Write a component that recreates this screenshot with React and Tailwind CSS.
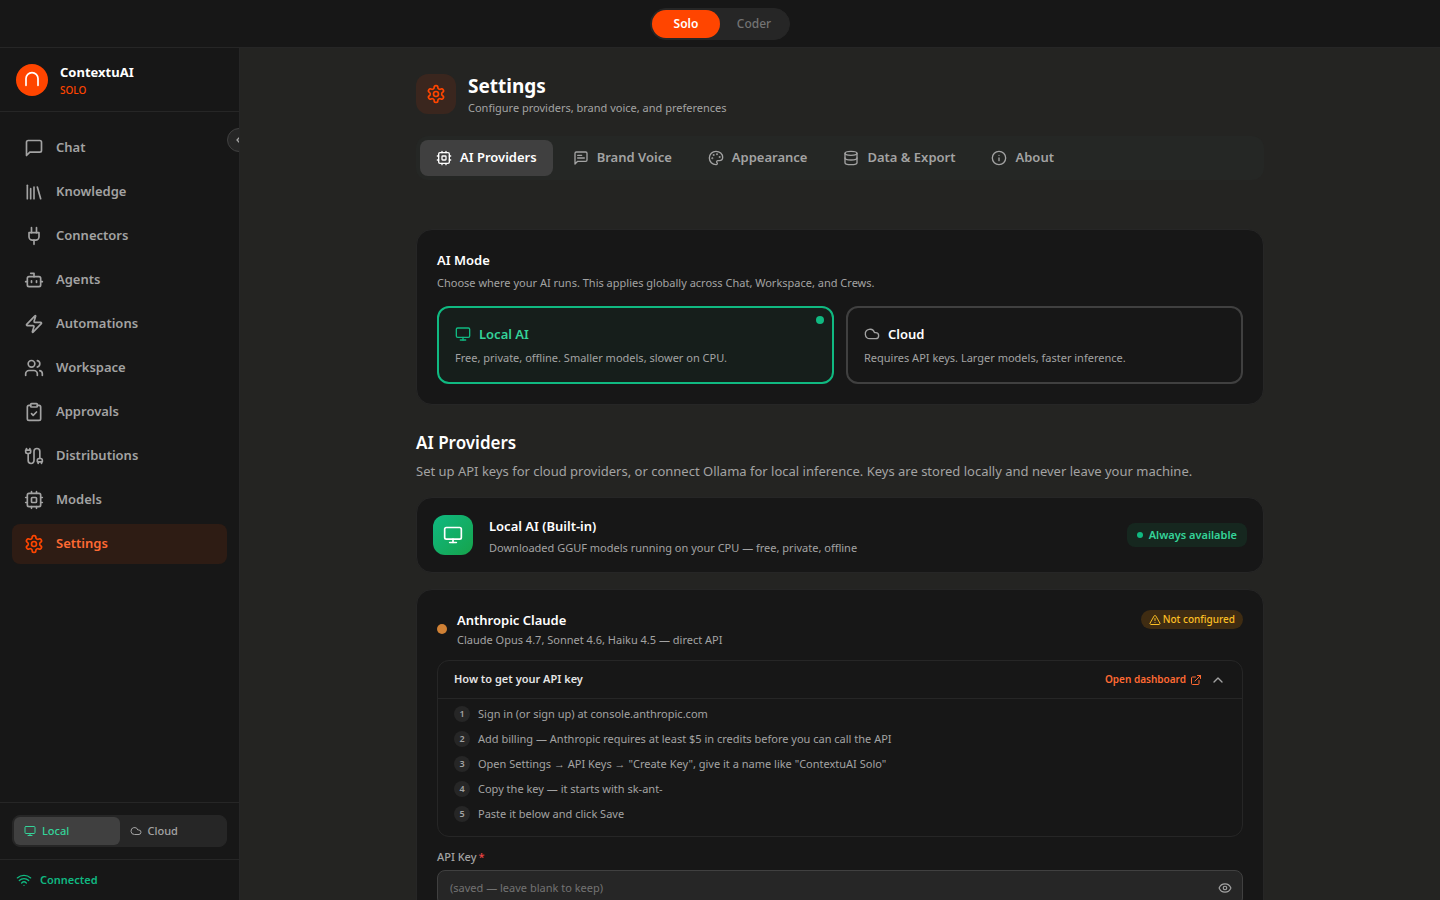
import React, { useState } from "react";
import {
  Library,
  Bot,
  Zap,
  Users,
  ClipboardCheck,
  ChevronLeft,
  ChevronUp,
  Monitor,
  Cloud,
  Wifi,
  Palette,
  Database,
  Info,
  TriangleAlert,
  ExternalLink,
  Eye,
} from "lucide-react";

function Glyph({ size = 20, className, children }) {
  return (
    <svg
      width={size}
      height={size}
      viewBox="0 0 24 24"
      fill="none"
      stroke="currentColor"
      strokeWidth="2"
      strokeLinecap="round"
      strokeLinejoin="round"
      className={className}
      aria-hidden="true"
    >
      {children}
    </svg>
  );
}

const BUBBLE = "M21 15a2 2 0 0 1-2 2H7l-4 4V5a2 2 0 0 1 2-2h14a2 2 0 0 1 2 2z";

function ChatIcon(props) {
  return (
    <Glyph {...props}>
      <path d={BUBBLE} />
    </Glyph>
  );
}

function ChatTextIcon(props) {
  return (
    <Glyph {...props}>
      <path d={BUBBLE} />
      <path d="M13 8H7" />
      <path d="M17 12H7" />
    </Glyph>
  );
}

function PlugIcon(props) {
  return (
    <Glyph {...props}>
      <path d="M12 22v-5" />
      <path d="M9 8V2" />
      <path d="M15 8V2" />
      <path d="M18 8v5a4 4 0 0 1-4 4h-4a4 4 0 0 1-4-4V8Z" />
    </Glyph>
  );
}

function CableIcon(props) {
  return (
    <Glyph {...props}>
      <path d="M4 9a2 2 0 0 1-2-2V5h6v2a2 2 0 0 1-2 2Z" />
      <path d="M3 5V3" />
      <path d="M7 5V3" />
      <path d="M19 15V6.5a3.5 3.5 0 0 0-7 0v11a3.5 3.5 0 0 1-7 0V9" />
      <path d="M17 21v-2" />
      <path d="M21 21v-2" />
      <path d="M22 19h-6v-2a2 2 0 0 1 2-2h2a2 2 0 0 1 2 2Z" />
    </Glyph>
  );
}

function CpuIcon(props) {
  return (
    <Glyph {...props}>
      <rect width="16" height="16" x="4" y="4" rx="2" />
      <rect width="6" height="6" x="9" y="9" rx="1" />
      <path d="M15 2v2M15 20v2M2 15h2M2 9h2M20 15h2M20 9h2M9 2v2M9 20v2" />
    </Glyph>
  );
}

function GearIcon(props) {
  return (
    <Glyph {...props}>
      <path d="M12.22 2h-.44a2 2 0 0 0-2 2v.18a2 2 0 0 1-1 1.73l-.43.25a2 2 0 0 1-2 0l-.15-.08a2 2 0 0 0-2.73.73l-.22.38a2 2 0 0 0 .73 2.73l.15.1a2 2 0 0 1 1 1.72v.51a2 2 0 0 1-1 1.74l-.15.09a2 2 0 0 0-.73 2.73l.22.38a2 2 0 0 0 2.73.73l.15-.08a2 2 0 0 1 2 0l.43.25a2 2 0 0 1 1 1.73V20a2 2 0 0 0 2 2h.44a2 2 0 0 0 2-2v-.18a2 2 0 0 1 1-1.73l.43-.25a2 2 0 0 1 2 0l.15.08a2 2 0 0 0 2.73-.73l.22-.39a2 2 0 0 0-.73-2.73l-.15-.08a2 2 0 0 1-1-1.74v-.5a2 2 0 0 1 1-1.74l.15-.09a2 2 0 0 0 .73-2.73l-.22-.38a2 2 0 0 0-2.73-.73l-.15.08a2 2 0 0 1-2 0l-.43-.25a2 2 0 0 1-1-1.73V4a2 2 0 0 0-2-2z" />
      <circle cx="12" cy="12" r="3" />
    </Glyph>
  );
}

const navItems = [
  { label: "Chat", icon: ChatIcon },
  { label: "Knowledge", icon: Library },
  { label: "Connectors", icon: PlugIcon },
  { label: "Agents", icon: Bot },
  { label: "Automations", icon: Zap },
  { label: "Workspace", icon: Users },
  { label: "Approvals", icon: ClipboardCheck },
  { label: "Distributions", icon: CableIcon },
  { label: "Models", icon: CpuIcon },
  { label: "Settings", icon: GearIcon, active: true },
];

const tabs = [
  { label: "AI Providers", icon: CpuIcon, active: true },
  { label: "Brand Voice", icon: ChatTextIcon },
  { label: "Appearance", icon: Palette },
  { label: "Data & Export", icon: Database },
  { label: "About", icon: Info },
];

const steps = [
  "Sign in (or sign up) at console.anthropic.com",
  "Add billing — Anthropic requires at least $5 in credits before you can call the API",
  'Open Settings → API Keys → "Create Key", give it a name like "ContextuAI Solo"',
  "Copy the key — it starts with sk-ant-",
  "Paste it below and click Save",
];

function Logo() {
  return (
    <svg viewBox="0 0 32 32" className="size-8 shrink-0" aria-hidden="true">
      <circle cx="16" cy="16" r="16" fill="#ff4500" />
      <path
        d="M10 21.3V14.6a6 6 0 0 1 12 0v6.7"
        fill="none"
        stroke="#fff"
        strokeWidth="1.7"
        strokeLinecap="round"
      />
    </svg>
  );
}

function TopBar() {
  return (
    <header className="flex h-12 shrink-0 items-center justify-center border-b border-[#262626] bg-[#171717]">
      <div className="flex rounded-full border border-[#262626] bg-[#262626] p-px">
        <button className="h-7 w-[68px] rounded-full bg-[#ff4500] text-[12px] font-semibold text-white">
          Solo
        </button>
        <button className="h-7 w-[68px] rounded-full text-[12px] font-medium text-[#737373]">
          Coder
        </button>
      </div>
    </header>
  );
}

function Sidebar() {
  return (
    <aside className="relative flex w-60 shrink-0 flex-col overflow-hidden border-r border-[#262626] bg-[#171717]">
      <div className="flex h-16 shrink-0 items-center gap-3 border-b border-[#262626] px-4">
        <Logo />
        <div>
          <div className="text-[13px] leading-5 font-bold text-white">ContextuAI</div>
          <div className="text-[10px] leading-4 font-medium text-[#ff4500]">SOLO</div>
        </div>
      </div>
      <button
        aria-label="Collapse sidebar"
        className="absolute top-20 -right-3 flex size-6 items-center justify-center rounded-full border border-[#404040] bg-[#262626] text-[#a3a3a3]"
      >
        <ChevronLeft size={16} />
      </button>
      <nav className="flex flex-1 flex-col gap-1 px-3 py-4">
        {navItems.map(({ label, icon: Icon, active }) => (
          <a
            key={label}
            href="#"
            aria-current={active ? "page" : undefined}
            className={
              active
                ? "flex h-10 shrink-0 items-center gap-3 rounded-lg bg-[#2e1c14] px-3 text-[13px] font-semibold text-[#ff6a33]"
                : "flex h-10 shrink-0 items-center gap-3 rounded-lg px-3 text-[13px] font-semibold text-[#a3a3a3]"
            }
          >
            <Icon size={20} className={active ? "text-[#ff4500]" : undefined} />
            {label}
          </a>
        ))}
      </nav>
      <div className="border-t border-[#262626] p-3">
        <div className="grid grid-cols-2 rounded-lg border border-[#262626] bg-[#262626] p-px text-[11px] font-medium">
          <button className="flex h-7 items-center gap-1.5 rounded-md bg-[#404040] px-2.5 text-[#34d399]">
            <Monitor size={12} />
            Local
          </button>
          <button className="flex h-7 items-center gap-1.5 rounded-md px-2.5 text-[#a3a3a3]">
            <Cloud size={12} />
            Cloud
          </button>
        </div>
      </div>
      <div className="flex h-[41px] shrink-0 items-center gap-2 border-t border-[#262626] px-4 text-[11px] font-semibold text-[#10b981]">
        <Wifi size={16} />
        Connected
      </div>
    </aside>
  );
}

function PageHeader() {
  return (
    <div className="flex items-center gap-3">
      <div className="flex size-10 shrink-0 items-center justify-center rounded-xl bg-[#3a261e] text-[#ff4500]">
        <GearIcon size={20} />
      </div>
      <div>
        <h1 className="text-[19px] leading-7 font-bold text-white">Settings</h1>
        <p className="text-[11px] leading-4 text-[#a3a3a3]">
          Configure providers, brand voice, and preferences
        </p>
      </div>
    </div>
  );
}

function TabBar() {
  return (
    <div role="tablist" className="mt-5 flex gap-1 rounded-xl bg-[#252725] p-1">
      {tabs.map(({ label, icon: Icon, active }) => (
        <button
          key={label}
          role="tab"
          aria-selected={!!active}
          className={
            active
              ? "flex h-9 items-center gap-2 rounded-lg bg-[#404040] px-4 text-[13px] font-semibold text-white"
              : "flex h-9 items-center gap-2 rounded-lg px-4 text-[13px] font-semibold text-[#a3a3a3]"
          }
        >
          <Icon size={16} />
          {label}
        </button>
      ))}
    </div>
  );
}

function ModeCard() {
  return (
    <section className="mt-[49px] rounded-2xl border border-[#262626] bg-[#171717] p-5">
      <h2 className="text-[13px] leading-5 font-semibold text-white">AI Mode</h2>
      <p className="mt-[5px] text-[11px] leading-4 text-[#a3a3a3]">
        Choose where your AI runs. This applies globally across Chat, Workspace, and Crews.
      </p>
      <div className="mt-[15px] grid grid-cols-2 gap-3">
        <button className="relative rounded-xl border-2 border-[#10b981] bg-[#161e1b] p-4 text-left">
          <span className="absolute top-2 right-2 size-2 rounded-full bg-[#10b981]" />
          <span className="flex items-center gap-2 text-[13px] leading-5 font-semibold text-[#34d399]">
            <Monitor size={16} className="text-[#10b981]" />
            Local AI
          </span>
          <span className="mt-1.5 block text-[11px] leading-4 text-[#a3a3a3]">
            Free, private, offline. Smaller models, slower on CPU.
          </span>
        </button>
        <button className="rounded-xl border-2 border-[#404040] p-4 text-left">
          <span className="flex items-center gap-2 text-[13px] leading-5 font-semibold text-white">
            <Cloud size={16} className="text-[#a3a3a3]" />
            Cloud
          </span>
          <span className="mt-1.5 block text-[11px] leading-4 text-[#a3a3a3]">
            Requires API keys. Larger models, faster inference.
          </span>
        </button>
      </div>
    </section>
  );
}

function LocalProviderCard() {
  return (
    <div className="flex items-center gap-4 rounded-2xl border border-[#262626] bg-[#171717] p-4">
      <div className="flex size-10 shrink-0 items-center justify-center rounded-xl bg-linear-to-br from-[#10b981] to-[#16a34a] text-white">
        <Monitor size={20} />
      </div>
      <div className="flex-1">
        <h3 className="text-[13px] leading-6 font-semibold text-white">Local AI (Built-in)</h3>
        <p className="mt-0.5 text-[11px] leading-4 text-[#a3a3a3]">
          Downloaded GGUF models running on your CPU — free, private, offline
        </p>
      </div>
      <span className="flex h-6 items-center gap-1.5 rounded-lg bg-[#16271f] px-2.5 text-[11px] font-semibold text-[#34d399]">
        <span className="size-1.5 rounded-full bg-[#10b981]" />
        Always available
      </span>
    </div>
  );
}

function AnthropicCard() {
  const [apiKey, setApiKey] = useState("");
  const [visible, setVisible] = useState(false);
  return (
    <div className="rounded-2xl border border-[#262626] bg-[#171717] p-5">
      <div className="flex items-start justify-between">
        <div className="flex items-center gap-2.5">
          <span className="size-2.5 rounded-full bg-[#d08135]" />
          <div>
            <h3 className="text-[13px] leading-5 font-semibold text-white">Anthropic Claude</h3>
            <p className="mt-0.5 text-[11px] leading-4 text-[#a3a3a3]">
              Claude Opus 4.7, Sonnet 4.6, Haiku 4.5 — direct API
            </p>
          </div>
        </div>
        <span className="flex h-[19px] items-center gap-0.5 rounded-full bg-[#3f2c12] px-2 text-[10px] font-medium text-[#fbbf24]">
          <TriangleAlert size={12} />
          Not configured
        </span>
      </div>

      <div className="mt-3 rounded-xl border border-[#262626]">
        <div className="flex h-[38px] items-center border-b border-[#262626] px-4">
          <h4 className="flex-1 text-[11px] font-semibold text-[#e5e5e5]">
            How to get your API key
          </h4>
          <a href="#" className="flex items-center gap-1 text-[10px] font-semibold text-[#ff6a33]">
            Open dashboard
            <ExternalLink size={12} />
          </a>
          <button aria-label="Collapse instructions" className="ml-2 text-[#a3a3a3]">
            <ChevronUp size={16} />
          </button>
        </div>
        <ol className="flex flex-col gap-1.5 px-4 pt-[5px] pb-[13px]">
          {steps.map((step, i) => (
            <li
              key={step}
              className="flex items-center gap-2 text-[11px] leading-[19px] text-[#a3a3a3]"
            >
              <span className="flex size-4 items-center justify-center rounded-full bg-[#262626] text-[9px] leading-4 font-semibold">
                {i + 1}
              </span>
              {step}
            </li>
          ))}
        </ol>
      </div>

      <label htmlFor="api-key" className="mt-3 block text-[11px] leading-4 font-medium text-[#a3a3a3]">
        API Key<span className="ml-0.5 text-[#ef4444]">*</span>
      </label>
      <div className="mt-[5px] flex h-9 items-center rounded-lg border border-[#404040] bg-[#262626] pr-2.5 pl-3">
        <input
          id="api-key"
          type={visible ? "text" : "password"}
          value={apiKey}
          onChange={(e) => setApiKey(e.target.value)}
          placeholder="(saved — leave blank to keep)"
          className="min-w-0 flex-1 bg-transparent text-[11px] text-white outline-none placeholder:text-[#737373]"
        />
        <button
          type="button"
          aria-label="Show API key"
          onClick={() => setVisible(!visible)}
          className="text-[#a3a3a3]"
        >
          <Eye size={14} />
        </button>
      </div>
    </div>
  );
}

export default function App() {
  return (
    <div className="flex h-screen flex-col bg-[#242422] font-['Noto_Sans','Open_Sans',sans-serif]">
      <TopBar />
      <div className="flex min-h-0 flex-1">
        <Sidebar />
        <main className="min-w-0 flex-1 overflow-y-auto [scrollbar-width:none]">
          <div className="mx-auto max-w-4xl p-6">
            <PageHeader />
            <TabBar />
            <ModeCard />
            <section className="mt-6">
              <h2 className="text-[17px] leading-7 font-semibold text-white">AI Providers</h2>
              <p className="mt-1 text-[13px] leading-5 text-[#a3a3a3]">
                Set up API keys for cloud providers, or connect Ollama for local inference. Keys are
                stored locally and never leave your machine.
              </p>
              <div className="mt-4 flex flex-col gap-4">
                <LocalProviderCard />
                <AnthropicCard />
              </div>
            </section>
          </div>
        </main>
      </div>
    </div>
  );
}
